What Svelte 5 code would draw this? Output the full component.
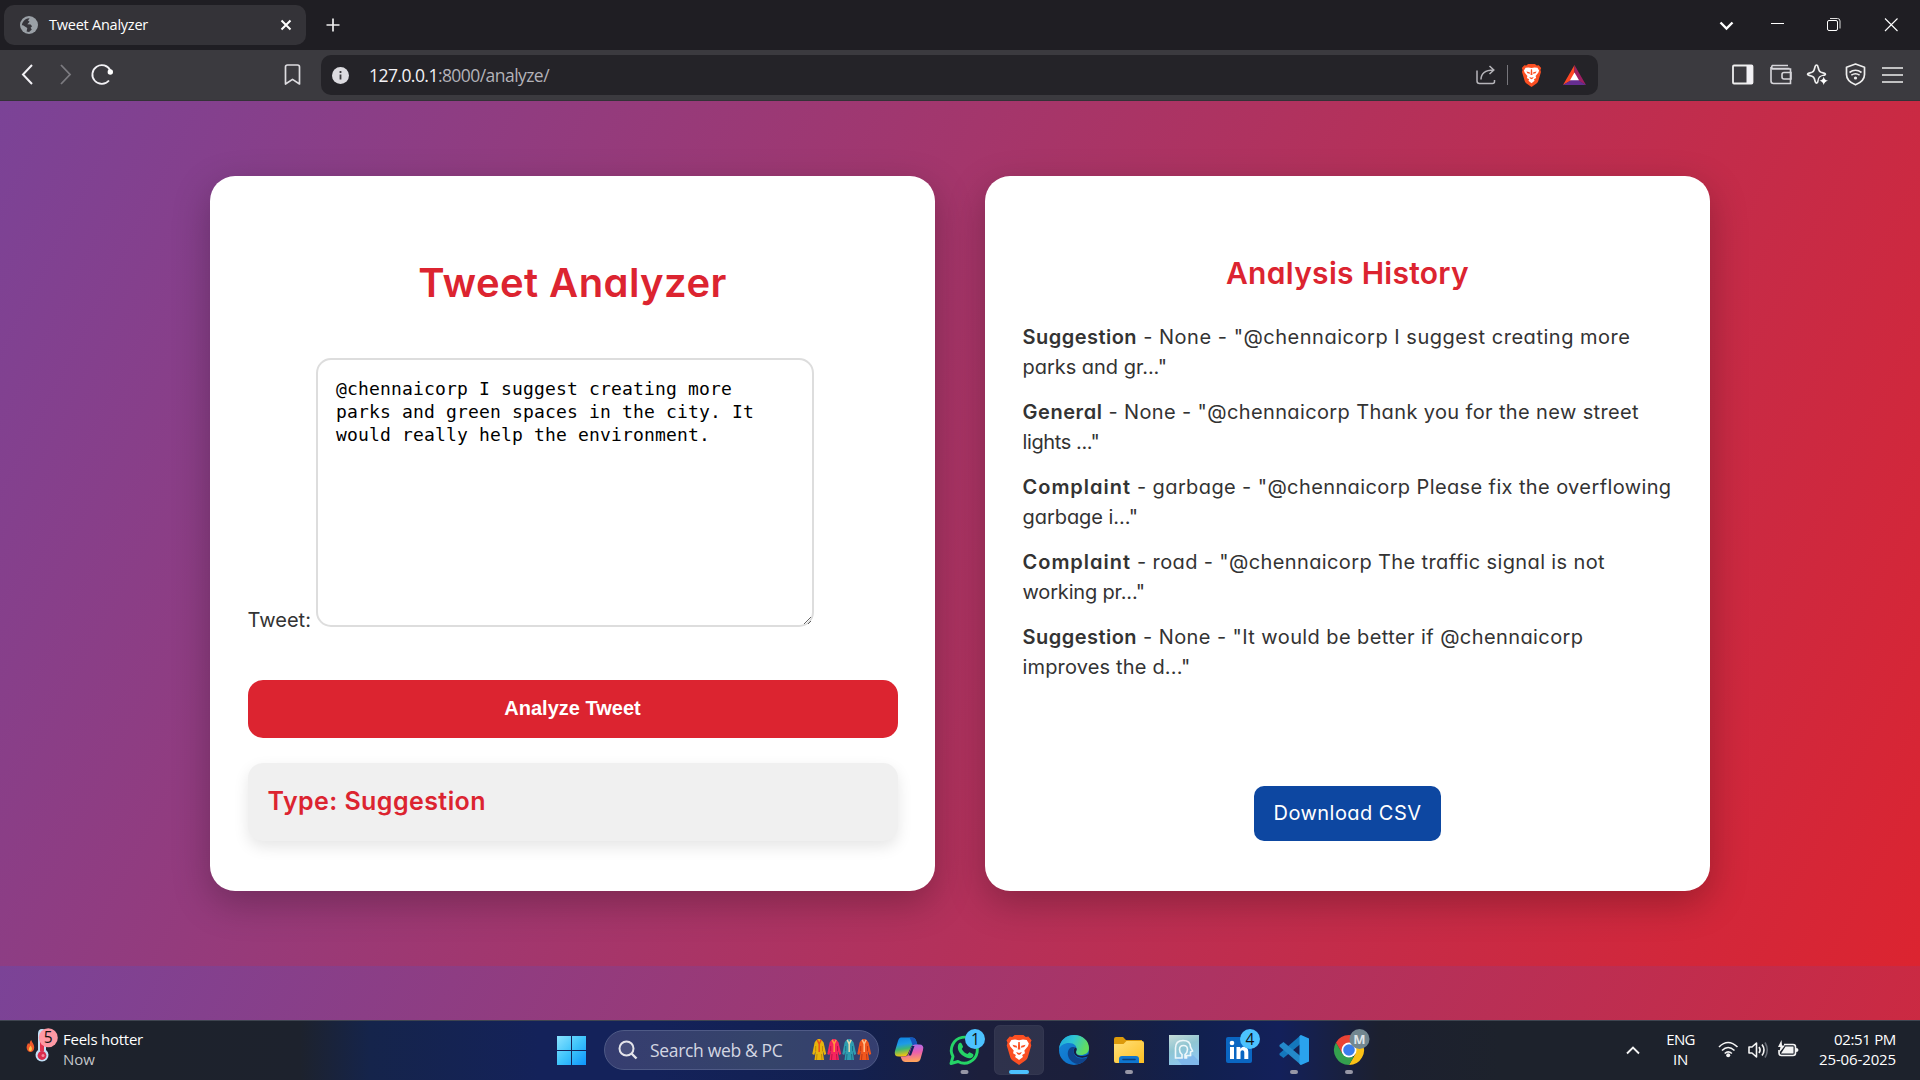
<script lang="ts">
  // Spreads letters evenly so that the text takes up the given width.
  function fit(node: HTMLElement, width: number) {
    const range = document.createRange();
    range.selectNodeContents(node);
    const natural = range.getBoundingClientRect().width;
    const gaps = Math.max(1, (node.textContent ?? '').length);
    node.style.letterSpacing = `${((width - natural) / gaps).toFixed(3)}px`;
  }

  let tweet = $state(
    '@chennaicorp I suggest creating more parks and green spaces in the city. It would really help the environment.'
  );

  const history = [
    { type: 'Suggestion', tw: 114.5, first: ' - None - "@chennaicorp I suggest creating more', fw: 493.5, second: 'parks and gr..."', sw: 144.5 },
    { type: 'General', tw: 80, first: ' - None - "@chennaicorp Thank you for the new street', fw: 536.5, second: 'lights ..."', sw: 77 },
    { type: 'Complaint', tw: 108.5, first: ' - garbage - "@chennaicorp Please fix the overflowing', fw: 540.5, second: 'garbage i..."', sw: 115.5 },
    { type: 'Complaint', tw: 108.5, first: ' - road - "@chennaicorp The traffic signal is not', fw: 474, second: 'working pr..."', sw: 122.5 },
    { type: 'Suggestion', tw: 114.5, first: ' - None - "It would be better if @chennaicorp', fw: 446.5, second: 'improves the d..."', sw: 168 }
  ];

  const kurtas = [
    { x: 0, body: '#e8b40c', dark: '#b98305', trim: '#e8501c' },
    { x: 15, body: '#f5245e', dark: '#b80f45', trim: '#ff9a3c' },
    { x: 30, body: '#2e9db0', dark: '#1a6c83', trim: '#e8d9b0' },
    { x: 45, body: '#f0561d', dark: '#b93410', trim: '#ffc08a' }
  ];
</script>

{#snippet lion()}
  <path d="M5 1.500 7 0h7l2 1.500 2-.3 2.600 3-.8 2 .6 2.200-2.900 9.600c-.3 1-1 1.700-1.800 2.300L10.500 24 5.300 20.300c-.8-.6-1.500-1.300-1.800-2.300L.6 8.400l.6-2.200-.8-2L3 1.200z" fill="#fb4f22" />
  <path d="M10.500 4.200 7.300 3.600 4.300 4 2.600 6.800l.7 2.100 2.900 3.500-.5 2.200 2.300 1.400-.7 1.500 3.200 2.500 3.200-2.500-.7-1.500 2.300-1.400-.5-2.200 2.900-3.500.7-2.100-1.700-2.800-3-.4z" fill="#fff" />
  <path d="M5.200 7.800 8.600 8.500 9 10.200 6.300 9.600zM15.800 7.800l-3.400.7-.4 1.700 2.700-.6zM8.200 13.500l2.300.8 2.300-.8-.9 1.700-1.400.8-1.400-.8zM9.900 5.500h1.200l.4 6h-2z" fill="#fb4f22" />
{/snippet}

<div class="screen">
  <header class="tabs">
    <div class="tab">
      <svg class="globe" viewBox="0 0 18 18"><circle cx="9" cy="9" r="9" fill="#9aa0a6" /><path d="M3.500 5.300C5 3.300 7.600 2 9.600 2.300L8 4.500l1.600 1.200L7.300 8.200l3.300.2 1.500 1.900-1.500 1.400 1.200 1.700-2.700 2.500-2.500-.4L7.300 12 3 9.200H1.800A7.500 7.500 0 0 1 3.500 5.300z" fill="#36353b" /><path d="M12 4.200 15.300 6l.8 3-2.300-.9z" fill="#9aa0a6" /></svg>
      <span class="title" use:fit={99}>Tweet Analyzer</span>
      <svg class="close" viewBox="0 0 12 12"><path d="M1.500 1.500l9 9M10.500 1.500l-9 9" stroke="#fff" stroke-width="2" /></svg>
    </div>
    <svg class="plus" viewBox="0 0 14 14"><path d="M7 .5v13M.5 7h13" stroke="#eee" stroke-width="1.700" /></svg>
    <div class="window">
      <svg width="45" height="50"><path d="M16.500 22.500l6 6 6-6" fill="none" stroke="#fff" stroke-width="2.400" /></svg>
      <svg width="57" height="50"><path d="M22 23.500h13" stroke="#fff" /></svg>
      <svg width="57" height="50"><rect x="21.500" y="20.500" width="10" height="10" rx="1.500" fill="none" stroke="#fff" /><path d="M24 18.500h7.500a2.500 2.500 0 0 1 2.500 2.500v7.500" fill="none" stroke="#ddd" /></svg>
      <svg width="57" height="50"><path d="M22 18.500l12.500 12.500M34.500 18.500L22 31" stroke="#fff" stroke-width="1.100" /></svg>
    </div>
  </header>

  <div class="toolbar">
    <svg width="37" height="50"><path d="M22 15l-9 9.500 9 9.500" fill="none" stroke="#f2f1f5" stroke-width="2" /></svg>
    <svg width="37" height="50"><path d="M14 15l9 9.500-9 9.500" fill="none" stroke="#7c7b80" stroke-width="1.800" /></svg>
    <svg width="37" height="50"><path d="M26.300 20.500A9.400 9.400 0 1 0 25 30.500" fill="none" stroke="#f2f1f5" stroke-width="1.800" /><circle cx="26.300" cy="22" r="2.700" fill="#fff" /></svg>
    <svg class="bookmark" width="37" height="50"><path d="M11.500 34V17q0-2 2-2h10q2 0 2 2v17l-7-4.600z" fill="none" stroke="#dddce0" stroke-width="1.700" stroke-linejoin="round" /></svg>
    <div class="url">
      <svg class="info" viewBox="0 0 17 17"><circle cx="8.500" cy="8.500" r="8.500" fill="#dcdbe0" /><path d="M8.500 7.500v5M8.500 4v2" stroke="#3b3a3f" stroke-width="1.800" /></svg>
      <span class="address" use:fit={180}>127.0.0.1<i>:8000/analyze/</i></span>
      <svg class="share" width="20" height="20" viewBox="0 0 20 20"><path d="M1 5.500V16q0 2.500 2.500 2.500h13q2 0 2-2V15M5 14.500c0-5.500 4-9.500 12.500-9.500M13.500 1l4.300 4-4.300 4" fill="none" stroke="#b6b5ba" stroke-width="1.500" /></svg>
      <span class="divider"></span>
      <svg class="shield" width="21" height="23" viewBox="0 0 21 24">{@render lion()}</svg>
      <svg width="23" height="20" viewBox="0 0 23 20"><path d="M11.500 0 0 20l11.500-6.500z" fill="#ff4724" /><path d="M11.500 0 23 20l-11.500-6.500z" fill="#9e1f63" /><path d="M0 20h23l-11.500-7z" fill="#662d91" /><path d="M11.500 7.500 16 15.300H7z" fill="#fff" /></svg>
    </div>
    <div class="tools">
      <svg viewBox="0 0 37.500 50"><rect x="9" y="15.500" width="19.500" height="18" rx="1" fill="none" stroke="#eee" stroke-width="1.800" /><path d="M22.500 15h6v19h-6z" fill="#f2f1f5" /></svg>
      <svg viewBox="0 0 37.500 50"><path d="M27.500 18.500H10.500a1.800 1.800 0 0 1 0-3H26M9 17v14q0 2.500 2.500 2.500H28.500V19H10" fill="none" stroke="#d6d5da" stroke-width="1.600" /><path d="M29 22.500h-7q-2 0-2 2v2.500q0 2 2 2h7z" fill="none" stroke="#d6d5da" stroke-width="1.600" /></svg>
      <svg viewBox="0 0 37.500 50"><path d="M17.500 15q1 0 1.300 1.200l1 3.500q.6 2 2.300 2.600l3.400 1.100q1.800.8 0 1.700l-3.400 1.100q-1.700.6-2.300 2.400l-1 3.300q-1.300 2.400-2.500 0l-1-3.300q-.6-1.800-2.300-2.400L9.500 25.100q-1.800-.9 0-1.700l3.400-1.100q1.700-.6 2.300-2.600l1-3.500Q16.600 15 17.500 15z" fill="none" stroke="#eee" stroke-width="1.700" /><circle cx="24.700" cy="31" r="5" fill="#3b3a3f" /><path d="M24.700 26.500q.7 3.800 4.300 4.300-3.600.6-4.300 4.300-.6-3.700-4.300-4.300 3.700-.5 4.300-4.300z" fill="#fff" /></svg>
      <svg viewBox="0 0 37.500 50"><path d="M18.500 14l9 3.200v7.300c0 5-4 8.300-9 10.300-5-2-9-5.300-9-10.300v-7.300z" fill="none" stroke="#eee" stroke-width="1.700" stroke-linejoin="round" /><path d="M12.500 22.500q6-4.500 12 0M14.300 25.200q4.200-2.800 8.300 0" fill="none" stroke="#eee" stroke-width="1.600" /><circle cx="18.500" cy="28" r="1.600" fill="#eee" /></svg>
      <svg viewBox="0 0 37.500 50"><path d="M8 18h21M8 25h21M8 32h21" stroke="#eee" stroke-width="1.700" /></svg>
    </div>
  </div>

  <main class="page">
    <section class="card form">
      <h1><span use:fit={308.5}>Tweet Analyzer</span></h1>
      <div class="field">
        <label for="tweet"><span use:fit={63.5}>Tweet:</span></label>
        <textarea id="tweet" bind:value={tweet} spellcheck="false"></textarea>
      </div>
      <button class="analyze">Analyze Tweet</button>
      <div class="result"><h3><span use:fit={218.5}>Type: Suggestion</span></h3></div>
    </section>

    <section class="card log">
      <h2><span use:fit={243}>Analysis History</span></h2>
      <ul>
        {#each history as item}
          <li>
            <strong use:fit={item.tw}>{item.type}</strong><span use:fit={item.fw}>{item.first}</span><br />
            <span use:fit={item.sw}>{item.second}</span>
          </li>
        {/each}
      </ul>
      <a class="download" href="#csv"><span use:fit={148}>Download CSV</span></a>
    </section>
  </main>

  <footer class="taskbar">
    <div class="weather">
      <svg width="63" height="60" viewBox="0 0 63 60">
        <path d="M31.200 20c1 3 3 4 3 7.500 0 3-1.800 4.500-3.800 4.500s-3.800-1.800-3.800-4.500c0-2 1-3 1.400-4.500l1.300 1.300c.3-1.500.7-2.800 1.900-4.300z" fill="#f0592a" /><path d="M30.600 25.500q2.800 4.500-.3 5.700-3.200-.7.3-5.700z" fill="#ffc24a" />
        <path d="M38 14q0-5 4-5t4 4v17a6.500 6.500 0 1 1-8 0z" fill="#c3e1f7" /><path d="M40 15h4v16h-4z" fill="#e0334f" /><circle cx="42" cy="35.500" r="4.400" fill="#d92c4c" /><circle cx="43" cy="35.500" r="1.500" fill="#f58ba0" />
        <circle cx="48.300" cy="17.700" r="9.500" fill="#ff99a4" /><text x="48.300" y="23" class="badge" text-anchor="middle">5</text>
      </svg>
      <div class="lines"><span use:fit={80}>Feels hotter</span><span class="now" use:fit={32}>Now</span></div>
    </div>

    <div class="apps">
      <svg viewBox="0 0 55 60">
        <defs><linearGradient id="win" x2="1" y2="1"><stop stop-color="#8be3ff" /><stop offset=".5" stop-color="#3ec4fb" /><stop offset="1" stop-color="#0d95fb" /></linearGradient></defs>
        <path d="M13 16h14v14H13zM28 16h14v14H28zM13 31h14v14H13zM28 31h14v14H28z" fill="url(#win)" />
      </svg>
      <div class="search">
        <svg width="20" height="20" viewBox="0 0 20 20"><circle cx="8.500" cy="8.500" r="7" fill="#ffffff18" stroke="#e4e4ea" stroke-width="2" /><path d="M13.500 13.500l5 5" stroke="#e4e4ea" stroke-width="2.400" /></svg>
        <span class="hint" use:fit={132.5}>Search web &amp; PC</span>
        <svg class="kurtas" width="60" height="22" viewBox="0 0 60 22">
          {#each kurtas as k}
            <g transform="translate({k.x} 0)">
              <path d="M4 1.500 6 0h2l2 1.500 1.600 2L14.200 15l-2 1-1.500-4.500L12 21H2.500l1.200-9.500L2.300 16l-2-1L2.600 3.500z" fill={k.body} />
              <path d="M3.700 7v5M10.500 7v5M5 15l-.5 6M9.500 15l.5 6" stroke={k.dark} stroke-width=".9" />
              <path d="M5.200.8 7.200 5l2-4.200M7.200 5v8" fill="none" stroke={k.trim} stroke-width="1.500" />
            </g>
          {/each}
        </svg>
      </div>
      <svg viewBox="1.500 0 55 60">
        <defs>
          <linearGradient id="cpa" x2=".2" y2="1"><stop stop-color="#0d7fe0" /><stop offset=".4" stop-color="#1e9be6" /><stop offset=".65" stop-color="#3fb673" /><stop offset="1" stop-color="#f2c40f" /></linearGradient>
          <linearGradient id="cpb" x2=".1" y2="1"><stop stop-color="#a56cf0" /><stop offset=".5" stop-color="#ea5fae" /><stop offset="1" stop-color="#ffa35c" /></linearGradient>
        </defs>
        <path d="M20.500 17.500h11q3 0 4 3l1.500 4.500h-3q-3 0-4 3l-3 6.500q-1 2-3 2h-5.500q-5.500 0-4-5.500l3-10Q18.500 17.500 20.500 17.500z" fill="url(#cpa)" />
        <path d="M29 17.500h2.500q3 0 4 3l1.500 4.500h-5q-1.500-5-3-7.500z" fill="#1756bd" />
        <path d="M34.500 24.500h4q5.500 0 4 5.500l-2.500 9q-1 3-4 3H25q-3 0-4-3l-1-2.500h4q3 0 4-2.500l2.500-6.500q1.500-3 4-3z" fill="url(#cpb)" />
        <path d="M31.500 26h2.500l-3.500 9.500H28z" fill="#14225a" />
      </svg>
      <svg viewBox="0 0 55 60">
        <path d="M14 43.500l2-7a13 13 0 1 1 5 5z" fill="none" stroke="#25d366" stroke-width="2.900" stroke-linejoin="round" />
        <path d="M21.500 24c1.500-2 3-1.200 3.500.3l1 2.300c.2 1-1 1.800-1.200 2.500 1.400 2.700 3.200 4 5.700 5 .8-.3 1.500-2 2.500-1.700l3 1.500c1 .7.300 3-1.300 3.900-2.300 1.200-5.500.3-8.700-2-3.700-2.700-6.500-7-4.500-11.800z" fill="#25d366" />
        <circle cx="38" cy="19" r="10" fill="#4cc2ff" /><text x="38.500" y="24.500" class="badge" text-anchor="middle">1</text>
        <rect x="23.500" y="50" width="8" height="4" rx="2" fill="#9797a6" />
      </svg>
      <svg viewBox="0 0 55 60">
        <rect x="2.500" y="5.500" width="49" height="49" rx="5" fill="#ffffff16" stroke="#ffffff12" />
        <g transform="translate(14 15) scale(1.240 1.250)">{@render lion()}</g>
        <rect x="17" y="50" width="20" height="4" rx="2" fill="#4cc2ff" />
      </svg>
      <svg viewBox="0 0 55 60">
        <defs><linearGradient id="edge" x2="1" y2=".3"><stop stop-color="#1aa5dd" /><stop offset=".5" stop-color="#2fc5d3" /><stop offset="1" stop-color="#62dd5f" /></linearGradient><linearGradient id="edge2" y2="1"><stop stop-color="#1789d8" /><stop offset="1" stop-color="#0a68c4" /></linearGradient></defs>
        <circle cx="27" cy="30" r="15" fill="url(#edge2)" />
        <path d="M12 29C13 20 19 15 27 15c9 0 15 6 15 13 0 5-4 7-8 7-5 0-6-2-5-4 2-5-2-8-7-8-5 0-8.500 2.500-10 6z" fill="url(#edge)" />
        <path d="M23 28c-5 5-1 15 8 16 4-.5 7.500-3 9.500-6.500-7 3-14-.5-14-6.500 0-1.700.7-2.800 1.600-3.500-2-.8-3.800-.5-5.100.5z" fill="#10448c" />
        <path d="M29.500 30.500c-1.500 3 1 5.500 5.500 5.500 3 0 5-.8 6.500-2.200l-.8 2.800c-7 3-14-.2-14-5.600 0-1.700.7-2.800 1.600-3.500 1.500.7 1.800 1.700 1.200 3z" fill="#161d45" />
      </svg>
      <svg viewBox="0 0 55 60">
        <path d="M12 19q0-2 2-2h7l3 3h16v8H12z" fill="#dc9a0b" />
        <defs><linearGradient id="fold" x2="1" y2="1"><stop stop-color="#ffe07a" /><stop offset="1" stop-color="#fdbf22" /></linearGradient></defs>
        <path d="M12 24h9.500l3-3H40q2 0 2 2v20H14q-2 0-2-2z" fill="url(#fold)" />
        <path d="M17 43v-4q0-3 3-3h14q3 0 3 3v4z" fill="#0f76cf" /><path d="M21 39.500h12" stroke="#0b3f78" stroke-width="1.600" stroke-linecap="round" />
        <rect x="23" y="50" width="8" height="4" rx="2" fill="#9797a6" />
      </svg>
      <svg viewBox="0 0 55 60">
        <defs><linearGradient id="tile" y2="1" x2=".4"><stop stop-color="#c7dcda" /><stop offset=".5" stop-color="#8fc5d2" /><stop offset="1" stop-color="#8ec8ef" /></linearGradient></defs>
        <path d="M12 15h30v30H12z" fill="url(#tile)" /><path d="M19 38h12l5-3 6 6v4H25z" fill="#7fb7ea" />
        <path d="M23 38h-4.500V28q0-7.500 7.500-7.500t7.500 6.500l2 4-2 1v3.500h-4V38H28v-3.500q2.500-2 2.500-5 0-4-4-4t-4 4q0 3 2.500 5V38z" fill="none" stroke="#eef7fa" stroke-width="1.600" />
      </svg>
      <svg viewBox="0 0 55 60">
        <rect x="14" y="17" width="26" height="26" rx="2" fill="#0a66c2" />
        <path d="M18 27h4v12h-4zM24.500 27h3.800v1.700c2.500-3.500 8-2.400 8 3V39h-4v-6.500c0-3.200-3.800-3-3.800 0V39h-4z" fill="#fff" /><circle cx="20" cy="23" r="2.300" fill="#fff" />
        <circle cx="38" cy="19" r="10" fill="#4cc2ff" /><text x="38" y="24.500" class="badge" text-anchor="middle">4</text>
      </svg>
      <svg viewBox="0 0 55 60">
        <path d="M34 15v8.500L16.500 38l-4-3v-1.500z" fill="#1477bd" /><path d="M34 45v-8.500L16.500 22l-4 3v1.500z" fill="#2489ca" /><path d="M34 15l8 3.500v23L34 45l-1.500-1V16z" fill="#2aa3ee" />
        <rect x="23" y="50" width="8" height="4" rx="2" fill="#9797a6" />
      </svg>
      <svg viewBox="0 0 55 60">
        <path d="M27 22.500h13A15 15 0 0 1 27 45l6.500-11.300z" fill="#fbc116" /><path d="M27 45A15 15 0 0 1 14 22.500l6.500 11.300 6.500 3.700 5-1z" fill="#34a04e" /><path d="M14 22.500a15 15 0 0 1 26 0H27l-6.500 11.300z" fill="#ea4335" />
        <circle cx="27" cy="30" r="7.500" fill="#fff" /><circle cx="27" cy="30" r="5.800" fill="#3b7ded" />
        <circle cx="37.500" cy="19" r="10" fill="#728790" /><text x="37.500" y="24" class="initial" text-anchor="middle">M</text>
        <rect x="23" y="50" width="8" height="4" rx="2" fill="#9797a6" />
      </svg>
    </div>

    <div class="tray">
      <svg width="14" height="9" viewBox="0 0 14 9"><path d="M1 7.500l6-6 6 6" fill="none" stroke="#f4f4f4" stroke-width="1.900" /></svg>
      <div class="lines lang"><span use:fit={28.5}>ENG</span><span use:fit={15}>IN</span></div>
      <svg class="status" width="82" height="24" viewBox="0 0 82 24">
        <g fill="none" stroke="#f4f4f4" stroke-width="1.600"><path d="M1 9q9-9 18.500 0M4 12.500q6-6 12.500 0M6.700 15.500q3.500-3.200 7.200 0" /><path d="M31 9h3l4.500-4v14L34 15h-3z" stroke-linejoin="round" /><path d="M41 9q2.200 3 0 6M44 6.500q4 5.500 0 11" /><path d="M47 4.500q4.500 7.500 0 15" stroke="#666b74" /><path d="M66 6.500h9q2.500 0 2.500 2.500v6q0 2.500-2.500 2.500H63.500q-2.500 0-2.500-2.500v-3" /></g>
        <circle cx="10.200" cy="17.300" r="2" fill="#f4f4f4" /><path d="M78 10q2.500 0 2.500 2t-2.500 2z" fill="#f4f4f4" /><path d="M67.500 8.500H75.500v7H63z" fill="#f4f4f4" /><path d="M63.500 2 60 9h2.500l-1.500 6 6-7.500h-3z" fill="#f4f4f4" />
      </svg>
      <div class="lines clock"><span use:fit={62}>02:51 PM</span><span use:fit={77}>25-06-2025</span></div>
    </div>
  </footer>
</div>

<style>
  :global(body) { margin: 0; overflow: hidden; }
  .screen { width: 1920px; height: 1080px; display: flex; flex-direction: column; overflow: hidden; font-family: 'Open Sans', 'Noto Sans', sans-serif; }
  svg { display: block; flex: none; }
  span, strong { white-space: pre; }

  .tabs { height: 50px; flex: none; display: flex; align-items: center; background: #1f1e23; }
  .tab { box-sizing: border-box; width: 302px; height: 40px; margin-left: 4px; padding: 0 14px 0 16px; display: flex; align-items: center; background: #343338; border-radius: 10px; }
  .globe { width: 18px; height: 18px; }
  .title { margin-left: 11px; color: #fff; font-size: 14.500px; line-height: 20px; }
  .close { width: 12px; height: 12px; margin-left: auto; }
  .plus { width: 14px; height: 14px; margin-left: 19.500px; }
  .window { display: flex; margin-left: auto; }

  .toolbar { box-sizing: border-box; height: 51px; flex: none; display: flex; padding: 0 8.500px 0 10px; background: #3b3a3f; border-bottom: 1px solid #333237; }
  .bookmark { margin-left: 153px; }
  .url { box-sizing: border-box; width: 1277px; height: 40px; margin: 5px 0 0 10px; padding: 0 12px 0 11px; display: flex; align-items: center; background: #242328; border-radius: 10px; }
  .info { width: 17px; height: 17px; }
  .address { margin: 0 auto 0 20px; color: #f2f1f5; font-size: 17.500px; line-height: 24px; }
  .address i { font-style: normal; color: #b3b2b8; }
  .divider { width: 1px; height: 20px; margin: 0 13px 0 11px; background: #77767c; }
  .shield { margin-right: 21px; }
  .tools { display: flex; margin-left: auto; }
  .tools svg { width: 37.500px; height: 50px; }

  .page { flex: 1; display: flex; justify-content: center; align-items: flex-start; gap: 50px; padding-top: 75px; background: linear-gradient(117deg, #7b4397, #dc2430) 0 0 / 100% 865px repeat; font-family: Inter, sans-serif; font-feature-settings: 'cv11'; color: #333; }
  .card { box-sizing: border-box; width: 725px; height: 715px; padding: 0 37.500px; background: #fff; border-radius: 25px; box-shadow: 0 12px 37px rgba(0, 0, 0, 0.250); }
  h1, h2, h3 { margin: 0; color: #dc2430; font-weight: 600; text-align: center; }
  .form { padding-top: 83px; }
  h1 { font-size: 40px; line-height: 48px; }
  .field { display: flex; align-items: flex-end; margin-top: 51px; }
  label { width: 68.500px; margin-bottom: -7px; font-size: 20px; line-height: 28px; }
  textarea { box-sizing: border-box; width: 498px; height: 269px; margin: 0; padding: 17px 18px; border: 2px solid #ddd; border-radius: 15px; outline: none; background: #fff; color: #000; font: 18px/23px 'DejaVu Sans Mono', monospace; letter-spacing: 0.163px; }
  .analyze { display: block; width: 100%; height: 58px; margin-top: 53px; padding: 0 0 2px; border: 0; border-radius: 15px; background: #dc2430; color: #fff; font: bold 20px 'Liberation Sans', Arial, sans-serif; }
  .result { box-sizing: border-box; height: 78px; margin-top: 25px; padding: 20px; background: #f0f0f0; border-radius: 15px; box-shadow: 0 6px 15px rgba(0, 0, 0, 0.1); }
  h3 { font-size: 25px; line-height: 36px; text-align: left; }

  .log { padding-top: 79px; display: flex; flex-direction: column; }
  h2 { font-size: 30px; line-height: 36px; }
  ul { list-style: none; margin: 30.500px 0 0; padding: 0; }
  li { height: 60px; margin-bottom: 15px; font-size: 20px; line-height: 30px; white-space: nowrap; }
  strong { font-weight: 600; }
  .download { align-self: center; width: 187px; height: 55px; margin-top: 89.500px; border-radius: 10px; background: #0d47a1; color: #fff; font-size: 20px; line-height: 55px; text-align: center; text-decoration: none; }

  .taskbar { box-sizing: border-box; height: 60px; flex: none; display: flex; border-top: 1px solid #3f4550; background: linear-gradient(90deg, #1d222b 0, #1d222d 300px, #15244b 370px, #14225a 540px, #14225a 650px, #122050 850px, #1c1f3c 980px, #1b1f3b 1080px, #11204f 1200px, #13205a 1280px, #1c202f 1380px, #1d222c 1500px); color: #fff; }
  .taskbar svg { margin-top: -1px; }
  .search svg { margin-top: 0; }
  .weather { width: 544px; display: flex; }
  .lines { display: flex; flex-direction: column; padding-top: 8px; font-size: 15px; line-height: 20px; }
  .now { color: #c3c5c9; }
  .badge { font: 15.500px 'Open Sans', sans-serif; fill: #111; }
  .initial { font: bold 13px 'Open Sans', sans-serif; fill: #dfe5e8; }
  .apps { display: flex; }
  .apps > svg { width: 55px; height: 60px; }
  .search { box-sizing: border-box; width: 275px; height: 40px; margin: 9px 3px 0 5px; padding: 0 6px 0 13px; display: flex; align-items: center; border: 1px solid #4f5a86; border-radius: 20px; background: linear-gradient(90deg, #363d70, #35446a 60%, #353e70); }
  .hint { margin-left: 12px; color: #d3d6e2; font-size: 17.500px; line-height: 24px; }
  .kurtas { margin-left: auto; }
  .tray { display: flex; margin-left: auto; padding-right: 24px; }
  .tray > svg { margin-top: 25px; }
  .lang { width: 55px; margin-left: 13px; align-items: center; }
  .tray > .status { margin: 17px 0 0 10px; }
  .clock { width: 90px; margin-left: 6px; align-items: flex-end; }
</style>
